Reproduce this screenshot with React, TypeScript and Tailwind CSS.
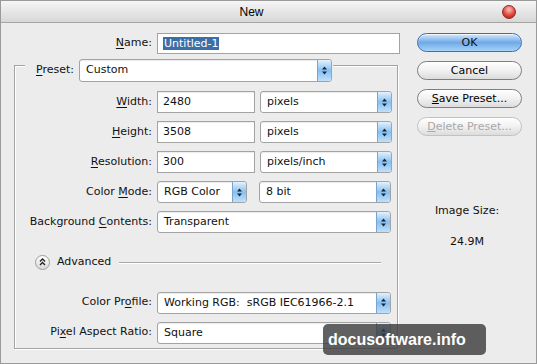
import React from 'react';

function Arrows() {
  return (
    <svg width="7" height="11" viewBox="0 0 7 11">
      <path d="M3.5 1.5 L6 4.5 H1 Z M3.5 9.5 L6 6.5 H1 Z" fill="#1b2633" />
    </svg>
  );
}

function Select({ value, className = '' }: { value: string; className?: string }) {
  return (
    <div
      className={`flex h-[22px] items-stretch rounded-[3px] border border-[#a3a3a3] bg-white shadow-[inset_0_1px_1px_rgba(0,0,0,0.08)] ${className}`}
    >
      <span className="flex-1 truncate whitespace-pre pl-[6px] leading-[20px]">{value}</span>
      <span className="flex w-[14px] items-center justify-center rounded-r-[3px] border-l border-[#7aa3cf] bg-gradient-to-b from-[#e4f2fd] via-[#86bff0] to-[#bfe0fb]">
        <Arrows />
      </span>
    </div>
  );
}

function Input({ value, className = '' }: { value: React.ReactNode; className?: string }) {
  return (
    <div
      className={`h-[22px] border border-[#a3a3a3] bg-white pl-[5px] leading-[20px] shadow-[inset_0_1px_1px_rgba(0,0,0,0.08)] ${className}`}
    >
      {value}
    </div>
  );
}

function Label({ pre = '', u, post = '', className = 'w-[137px]' }: { pre?: string; u: string; post?: string; className?: string }) {
  return (
    <span className={`shrink-0 whitespace-pre text-right ${className}`}>
      {pre}
      <u className="underline-offset-2">{u}</u>
      {post}
    </span>
  );
}

function Button({ children, primary, disabled }: { children: React.ReactNode; primary?: boolean; disabled?: boolean }) {
  const base = 'flex h-[19px] w-[105px] items-center justify-center rounded-full border leading-none';
  if (primary) {
    return (
      <div className={`${base} border-[#3e6fae] bg-gradient-to-b from-[#d7e9fb] via-[#6fa9e6] to-[#a6d3f8] shadow-[inset_0_1px_0_rgba(255,255,255,0.7)]`}>
        {children}
      </div>
    );
  }
  return (
    <div
      className={`${base} bg-gradient-to-b from-white via-[#f1f1f1] to-[#dcdcdc] shadow-[inset_0_1px_0_#fff] ${
        disabled ? 'border-[#c2c2c2] text-[#a8a8a8]' : 'border-[#7e7e7e] text-black'
      }`}
    >
      {children}
    </div>
  );
}

export default function App() {
  return (
    <div className="relative h-[364px] w-[537px] overflow-hidden border border-[#9a9a9a] bg-[#ececec] font-['DejaVu_Sans',sans-serif] text-[11px] text-[#111]">
      {/* title bar */}
      <div className="flex h-[22px] items-center border-b border-[#a5a5a5] bg-gradient-to-b from-[#f6f6f6] to-[#d7d7d7]">
        <span className="flex-1 text-center font-['Liberation_Sans',sans-serif] text-[12px] text-black">New</span>
        <span className="mr-[20px] h-[14px] w-[14px] rounded-full border border-[#8c2a24] bg-[radial-gradient(circle_at_50%_30%,#ffc2ba,#e2463b_55%,#9c1c16)]" />
      </div>

      <div className="flex">
        {/* left side */}
        <div className="w-[404px] pt-[10px]">
          <div className="flex h-[21px] items-center gap-[5px]">
            <Label u="N" post="ame:" className="w-[151px]" />
            <div className="h-[21px] w-[243px] border border-[#a3a3a3] bg-white pl-[5px] pt-[1px] leading-[17px]">
              <span className="bg-[#3d6ea6] px-[1px] text-white">Untitled-1</span>
            </div>
          </div>

          <div className="ml-[13px] mt-[11px] w-[384px] border border-[#a3a3a3] pb-[4px] shadow-[inset_1px_1px_0_#fff,1px_1px_0_#fff]">
            <div className="-mt-[7px] ml-[10px] flex w-fit items-center gap-[5px] bg-[#ececec] pl-[11px] pr-[1px]">
              <Label u="P" post="reset:" className="" />
              <Select value="Custom" className="h-[23px] w-[253px]" />
            </div>

            <div className="mt-[9px] flex flex-col gap-[8px]">
              <div className="flex items-center gap-[5px]">
                <Label u="W" post="idth:" />
                <Input value="2480" className="w-[98px]" />
                <Select value="pixels" className="w-[132px]" />
              </div>
              <div className="flex items-center gap-[5px]">
                <Label u="H" post="eight:" />
                <Input value="3508" className="w-[98px]" />
                <Select value="pixels" className="w-[132px]" />
              </div>
              <div className="flex items-center gap-[5px]">
                <Label u="R" post="esolution:" />
                <Input value="300" className="w-[98px]" />
                <Select value="pixels/inch" className="w-[132px]" />
              </div>
              <div className="flex items-center gap-[5px]">
                <Label pre="Color " u="M" post="ode:" />
                <Select value="RGB Color" className="w-[90px]" />
                <Select value="8 bit" className="ml-[7px] w-[132px]" />
              </div>
              <div className="flex items-center gap-[5px]">
                <Label pre="Background " u="C" post="ontents:" />
                <Select value="Transparent" className="w-[234px]" />
              </div>
            </div>

            <div className="mr-[16px] mt-[21px] flex items-center pl-[20px]">
              <span className="flex h-[15px] w-[15px] items-center justify-center rounded-full border border-[#9d9d9d] bg-gradient-to-b from-white to-[#d9d9d9]">
                <svg width="7" height="8" viewBox="0 0 7 8">
                  <path d="M1 3.5 L3.5 1 L6 3.5 M1 7 L3.5 4.5 L6 7" stroke="#222" strokeWidth="1.3" fill="none" />
                </svg>
              </span>
              <span className="ml-[7px]">Advanced</span>
              <span className="ml-[8px] h-px flex-1 bg-[#a8a8a8] shadow-[0_1px_0_#fff]" />
            </div>

            <div className="mt-[21px] flex flex-col gap-[8px]">
              <div className="flex items-center gap-[5px]">
                <Label pre="Color Pr" u="o" post="file:" />
                <Select value="Working RGB:  sRGB IEC61966-2.1" className="w-[234px]" />
              </div>
              <div className="flex items-center gap-[5px]">
                <Label pre="Pi" u="x" post="el Aspect Ratio:" />
                <Select value="Square" className="w-[234px]" />
              </div>
            </div>
          </div>
        </div>

        {/* right side */}
        <div className="flex flex-1 flex-col pl-[12px] pt-[10px]">
          <div className="flex flex-col gap-[9px]">
            <Button primary>OK</Button>
            <Button>Cancel</Button>
            <Button>
              <span>
                <u>S</u>ave Preset...
              </span>
            </Button>
            <Button disabled>
              <span>
                <u>D</u>elete Preset...
              </span>
            </Button>
          </div>
          <div className="mt-[67px] flex w-[100px] flex-col items-center gap-[14px]">
            <span>Image Size:</span>
            <span>24.9M</span>
          </div>
        </div>
      </div>

      {/* watermark */}
      <div className="absolute left-[322px] top-[323px] flex h-[31px] w-[163px] items-center rounded-[5px] bg-[#3a3a3a]/80 pl-[5px] font-['Liberation_Sans',sans-serif] text-[16px] font-bold text-white">
        docusoftware.info
      </div>
    </div>
  );
}
